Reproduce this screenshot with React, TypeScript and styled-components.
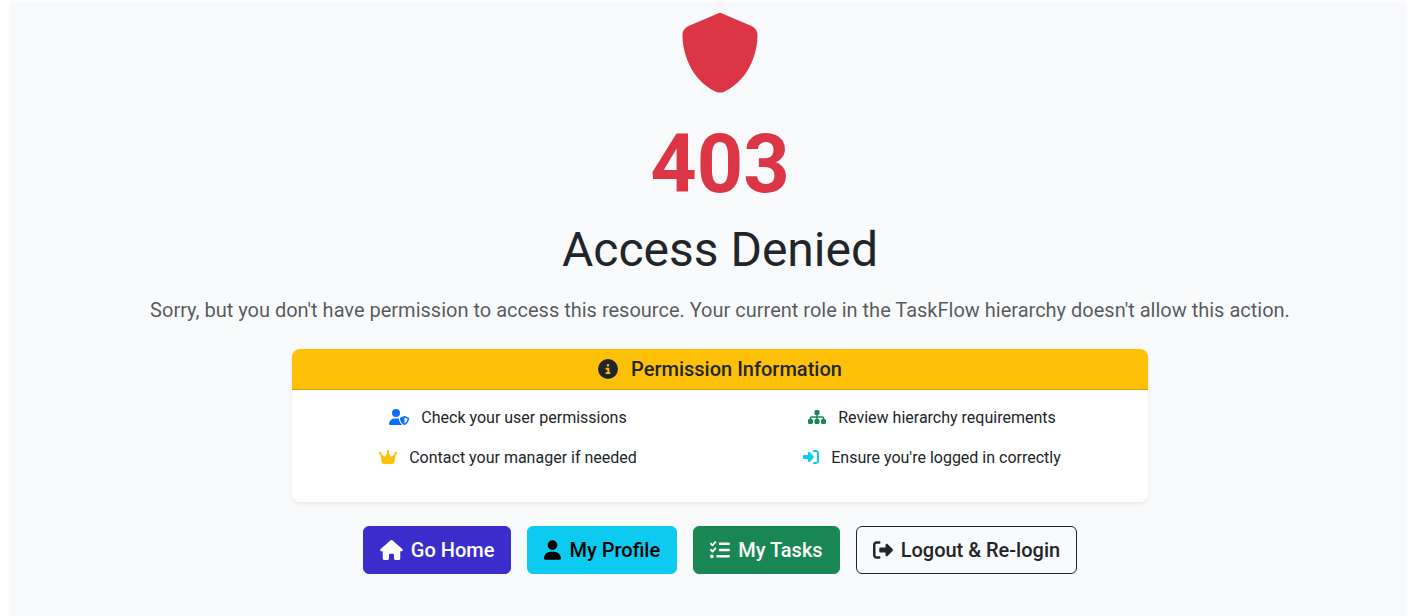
import React from 'react';
import styled, { createGlobalStyle } from 'styled-components';
import {
  FaShield,
  FaCircleInfo,
  FaUserShield,
  FaCrown,
  FaSitemap,
  FaRightToBracket,
  FaHouse,
  FaUser,
  FaListCheck,
  FaRightFromBracket,
} from 'react-icons/fa6';

const GlobalStyle = createGlobalStyle`
  *, *::before, *::after { box-sizing: border-box; }
  body {
    margin: 0;
    background: #fff;
    color: #212529;
    font-family: Roboto, "Liberation Sans", sans-serif;
    font-size: 16px;
    line-height: 24px;
  }
`;

const Page = styled.main`
  display: flex;
  flex-direction: column;
  align-items: center;
  min-height: calc(100vh - 1px);
  margin: 1px 9px 0;
  padding: 12px 0 24px 24px;
  background: #f8fafc;
  text-align: center;
`;

const ShieldMark = styled(FaShield)`
  display: block;
  flex: none;
  width: 80px;
  height: 80px;
  margin-bottom: 24px;
  color: #dc3545;
`;

const Code = styled.h1`
  margin: 0 0 8px;
  color: #dc3545;
  font-size: 81px;
  font-weight: 700;
  line-height: 96px;
`;

const Title = styled.h2`
  margin: 0 0 16px;
  font-size: 48px;
  font-weight: 400;
  line-height: 58px;
`;

const Lead = styled.p`
  margin: 0 0 24px;
  color: rgba(33, 37, 41, 0.75);
  font-size: 20px;
  line-height: 30px;
`;

const Card = styled.section`
  width: 100%;
  max-width: 856px;
  margin-bottom: 24px;
  overflow: hidden;
  border-radius: 8px;
  background: #fff;
  box-shadow: 0 2px 4px rgba(0, 0, 0, 0.075);
`;

const CardTitle = styled.h3`
  display: flex;
  align-items: center;
  justify-content: center;
  gap: 13px;
  margin: 0;
  padding: 8px 16px;
  border-bottom: 1px solid rgba(0, 0, 0, 0.175);
  background: #ffc107;
  font-size: 20px;
  font-weight: 500;
  line-height: 24px;
`;

const Hints = styled.ul`
  display: grid;
  grid-template-columns: 1fr 1fr;
  row-gap: 16px;
  margin: 0;
  padding: 16px 4px 32px;
  list-style: none;

  @media (max-width: 640px) {
    grid-template-columns: 1fr;
  }
`;

const Hint = styled.li<{ $tone: string; $iconWidth: number }>`
  display: flex;
  align-items: center;
  justify-content: center;
  gap: 12px;

  svg {
    width: ${({ $iconWidth }) => $iconWidth}px;
    height: 16px;
    margin-bottom: 2px;
    color: ${({ $tone }) => $tone};
  }
`;

const Actions = styled.nav`
  display: flex;
  flex-wrap: wrap;
  justify-content: center;
  gap: 16px;
`;

const Action = styled.a<{ $fill: string; $text: string; $edge?: string; $iconWidth: number }>`
  display: flex;
  align-items: center;
  gap: 8px;
  padding: 8px 16px;
  border: 1px solid ${({ $fill, $edge }) => $edge ?? $fill};
  border-radius: 6px;
  background: ${({ $fill }) => $fill};
  color: ${({ $text }) => $text};
  font-size: 20px;
  font-weight: 500;
  line-height: 30px;
  text-decoration: none;

  svg {
    width: ${({ $iconWidth }) => $iconWidth}px;
    height: 20px;
  }
`;

const hints = [
  { icon: FaUserShield, iconWidth: 20, tone: '#0d6efd', label: 'Check your user permissions' },
  { icon: FaSitemap, iconWidth: 18, tone: '#198754', label: 'Review hierarchy requirements' },
  { icon: FaCrown, iconWidth: 18, tone: '#ffc107', label: 'Contact your manager if needed' },
  {
    icon: FaRightToBracket,
    iconWidth: 16,
    tone: '#0dcaf0',
    label: "Ensure you're logged in correctly",
  },
];

const actions = [
  { icon: FaHouse, iconWidth: 23, fill: '#3b2dcc', text: '#fff', label: 'Go Home', href: '#home' },
  { icon: FaUser, iconWidth: 17, fill: '#0dcaf0', text: '#000', label: 'My Profile', href: '#profile' },
  { icon: FaListCheck, iconWidth: 20, fill: '#198754', text: '#fff', label: 'My Tasks', href: '#tasks' },
  {
    icon: FaRightFromBracket,
    iconWidth: 20,
    fill: 'transparent',
    text: '#212529',
    edge: '#212529',
    label: 'Logout & Re-login',
    href: '#logout',
  },
];

export default function App() {
  return (
    <>
      <GlobalStyle />
      <Page>
        <ShieldMark aria-hidden />
        <Code>403</Code>
        <Title>Access Denied</Title>
        <Lead>
          Sorry, but you don't have permission to access this resource. Your current role in the
          TaskFlow hierarchy doesn't allow this action.
        </Lead>
        <Card>
          <CardTitle>
            <FaCircleInfo aria-hidden />
            Permission Information
          </CardTitle>
          <Hints>
            {hints.map(({ icon: Icon, iconWidth, tone, label }) => (
              <Hint key={label} $tone={tone} $iconWidth={iconWidth}>
                <Icon aria-hidden />
                {label}
              </Hint>
            ))}
          </Hints>
        </Card>
        <Actions aria-label="Next steps">
          {actions.map(({ icon: Icon, iconWidth, fill, text, edge, label, href }) => (
            <Action
              key={label}
              href={href}
              $fill={fill}
              $text={text}
              $edge={edge}
              $iconWidth={iconWidth}
            >
              <Icon aria-hidden />
              {label}
            </Action>
          ))}
        </Actions>
      </Page>
    </>
  );
}
